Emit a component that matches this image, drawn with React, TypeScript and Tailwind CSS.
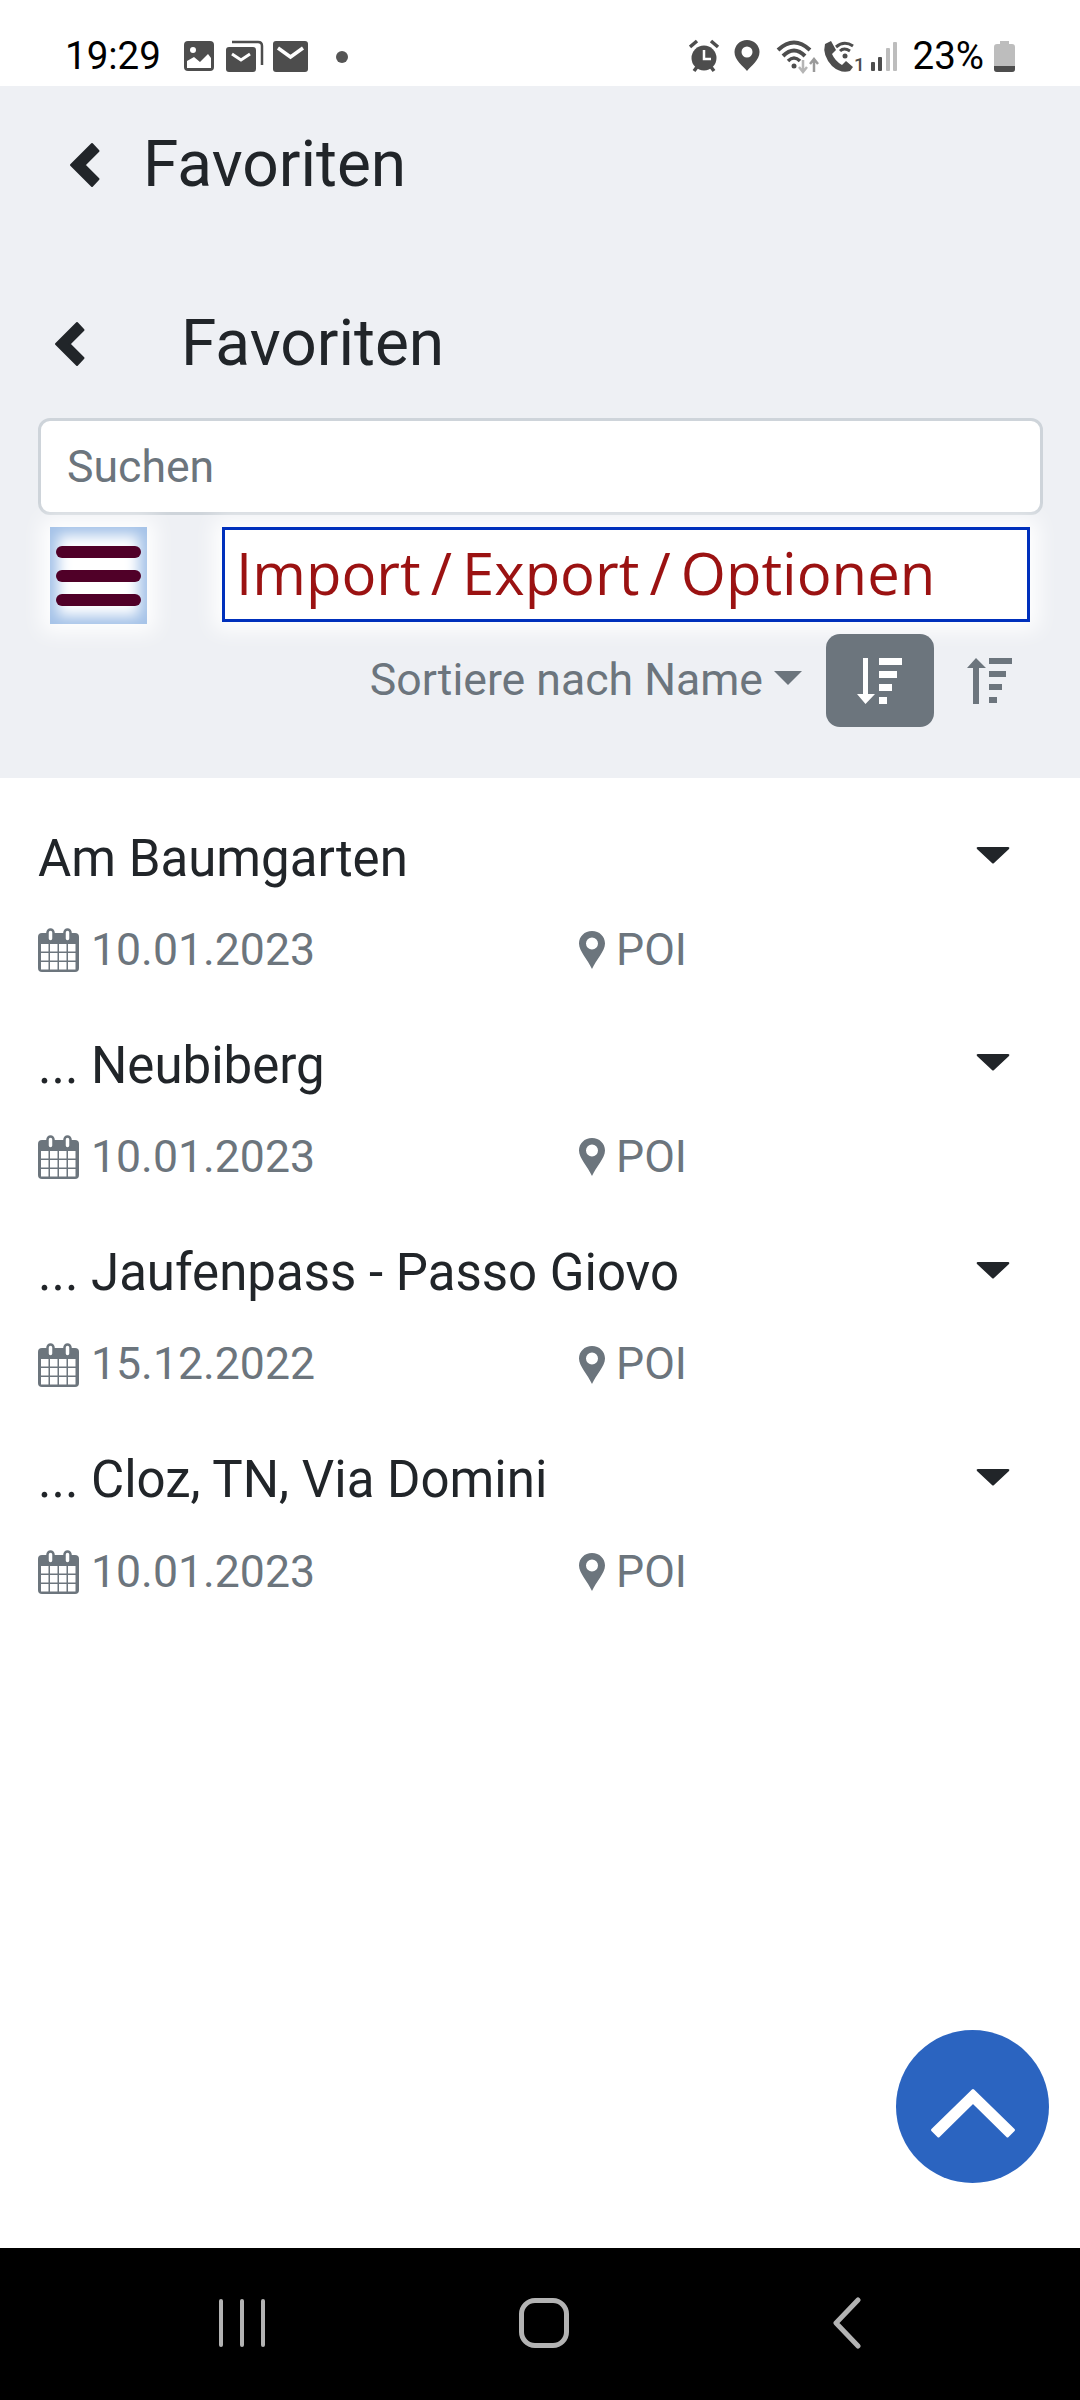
const rows = [
  { title: 'Am Baumgarten', date: '10.01.2023' },
  { title: '... Neubiberg', date: '10.01.2023' },
  { title: '... Jaufenpass - Passo Giovo', date: '15.12.2022' },
  { title: '... Cloz, TN, Via Domini', date: '10.01.2023' },
];

function Chevron() {
  return (
    <svg width="32" height="46" viewBox="0 0 32 46" className="shrink-0">
      <path d="M2 23 L23 2 L29.500 9 L15.500 23 L29.500 37 L23 44 Z" fill="#212529" stroke="#212529" strokeWidth="2" strokeLinejoin="round" />
    </svg>
  );
}

function StatusLeftIcons() {
  return (
    <svg width="170" height="34" viewBox="0 0 170 34" className="ml-[21px] shrink-0">
      {/* picture */}
      <rect x="2" y="2" width="30" height="30" rx="4" fill="#4d4d4d" />
      <circle cx="11" cy="11" r="3" fill="#fff" />
      <path d="M5 29 V22 L12 18 L18 23 L26 15 L29 19 V29 Z" fill="#fff" />
      {/* stacked mail */}
      <path d="M50 3 H76 Q80 3 80 7 V26" fill="none" stroke="#4d4d4d" strokeWidth="2.500" />
      <rect x="44" y="8" width="30" height="25" rx="3" fill="#4d4d4d" />
      <path d="M50 15 L59 21 L68 15" fill="none" stroke="#fff" strokeWidth="3" />
      {/* mail */}
      <rect x="91" y="2" width="35" height="31" rx="3" fill="#4d4d4d" />
      <path d="M96 9 L108.500 18 L121 9" fill="none" stroke="#fff" strokeWidth="3.500" />
      {/* dot */}
      <circle cx="160" cy="18" r="6" fill="#555" />
    </svg>
  );
}

function StatusRightIcons() {
  return (
    <svg width="210" height="38" viewBox="0 0 210 38" className="-mb-[4px] shrink-0">
      {/* alarm */}
      <circle cx="15" cy="19" r="12.500" fill="#4d4d4d" />
      <path d="M15 11 V20 H22" fill="none" stroke="#fff" strokeWidth="2.500" />
      <path d="M1 8 L8 2 M29 8 L22 2" stroke="#4d4d4d" strokeWidth="3.500" />
      <path d="M5 32 L8 28 M25 32 L22 28" stroke="#4d4d4d" strokeWidth="3.500" />
      {/* pin */}
      <path fillRule="evenodd" d="M58 1 C65 1 70.500 6.500 70.500 13 C70.500 21 62 27 58 32 C54 27 45.500 21 45.500 13 C45.500 6.500 51 1 58 1 Z M58 7.500 A5.500 5.500 0 1 0 58 18.500 A5.500 5.500 0 1 0 58 7.500 Z" fill="#4d4d4d" />
      {/* wifi */}
      <path d="M89 11 Q105 -4 121 11" fill="none" stroke="#4d4d4d" strokeWidth="4" />
      <path d="M94 17 Q105 6 116 17" fill="none" stroke="#4d4d4d" strokeWidth="4" />
      <path d="M99 22 Q105 16 111 22" fill="none" stroke="#4d4d4d" strokeWidth="3.500" />
      <circle cx="105" cy="27" r="2.500" fill="#4d4d4d" />
      <path d="M114 21 V32 M110 28 L114 33 L118 28" fill="none" stroke="#b5b5b5" strokeWidth="2.500" />
      <path d="M125 33 V21 M121 25 L125 20 L129 25" fill="none" stroke="#9a9a9a" strokeWidth="2.500" />
      {/* wifi call */}
      <path d="M136 5 L142 2 L147 11 L143 15 Q146 22 153 26 L157 22 L164 28 L161 32 Q152 35 143 27 Q133 16 136 5 Z" fill="#4d4d4d" />
      <path d="M147 8 Q155 1 164 7 M151 12 Q155 8 161 12" fill="none" stroke="#4d4d4d" strokeWidth="3" />
      <circle cx="156" cy="17" r="2.500" fill="#4d4d4d" />
      <text x="165" y="32" fontSize="19" fontWeight="500" fill="#4d4d4d" fontFamily="Roboto, sans-serif">1</text>
      {/* signal */}
      <rect x="182" y="23" width="4" height="9" rx="1" fill="#4d4d4d" />
      <rect x="189" y="18" width="4" height="14" rx="1" fill="#4d4d4d" />
      <rect x="197" y="9" width="4" height="23" rx="1" fill="#bdbdbd" />
      <rect x="204" y="3" width="4" height="29" rx="1" fill="#bdbdbd" />
    </svg>
  );
}

function Battery() {
  return (
    <svg width="22" height="33" viewBox="0 0 22 33" className="ml-[10px] shrink-0">
      <path d="M6 1 H15 V4 H18 Q21 4 21 7 V29 Q21 32 18 32 H3 Q0 32 0 29 V7 Q0 4 3 4 H6 Z" fill="#bdbdbd" />
      <path d="M0 26 H21 V29 Q21 32 18 32 H3 Q0 32 0 29 Z" fill="#4d4d4d" />
    </svg>
  );
}

function SortDownIcon() {
  return (
    <svg width="46" height="48" viewBox="0 0 46 48" fill="#fff">
      <path d="M6 1 H11 V37 H18 L8.500 47 L0 37 H6 Z" />
      <rect x="22" y="1" width="23" height="7" />
      <rect x="22" y="14" width="18" height="7" />
      <rect x="22" y="27" width="13" height="7" />
      <rect x="22" y="40" width="8" height="7" />
    </svg>
  );
}

function SortUpIcon() {
  return (
    <svg width="45" height="46" viewBox="0 0 45 46" fill="#6c757d">
      <path d="M6 46 H12 V10 H19 L9 0 L0 10 H6 Z" />
      <rect x="22" y="0" width="23" height="6" />
      <rect x="22" y="13" width="17" height="6" />
      <rect x="22" y="26" width="13" height="6" />
      <rect x="22" y="39" width="8" height="6" />
    </svg>
  );
}

function CalendarIcon() {
  return (
    <svg width="41" height="44" viewBox="0 0 41 44" className="shrink-0">
      <rect x="0" y="5" width="41" height="39" rx="4" fill="#6c757d" />
      <rect x="9.500" y="1.500" width="6" height="12" rx="3" fill="#fff" stroke="#6c757d" strokeWidth="2.500" />
      <rect x="26.500" y="1.500" width="6" height="12" rx="3" fill="#fff" stroke="#6c757d" strokeWidth="2.500" />
      <g fill="#fff">
        {[16, 25, 34].map((y) =>
          [3, 12, 21, 30].map((x) => <rect key={`${x}-${y}`} x={x} y={y} width="7.500" height="7.500" />),
        )}
      </g>
    </svg>
  );
}

function PinIcon() {
  return (
    <svg width="26" height="38" viewBox="0 0 26 38" className="shrink-0">
      <path fillRule="evenodd" d="M13 0 C20.500 0 26 5.500 26 12.500 C26 20 17 29 13 38 C9 29 0 20 0 12.500 C0 5.500 5.500 0 13 0 Z M13 6.500 A6 6 0 1 0 13 18.500 A6 6 0 1 0 13 6.500 Z" fill="#6c757d" />
    </svg>
  );
}

function ListRow({ title, date }: { title: string; date: string }) {
  return (
    <div className="h-[207.3px] pl-[38px] pr-[70px]">
      <div className="flex h-[60px] items-center justify-between">
        <span className="text-[51px] leading-none text-[#212529]">{title}</span>
        <svg width="34" height="18" viewBox="0 0 34 18" className="-mt-[6px]">
          <path d="M2 1 H32 Q34 1 33 3 L18 17 Q17 18 16 17 L1 3 Q0 1 2 1 Z" fill="#212529" />
        </svg>
      </div>
      <div className="mt-[32px] flex h-[60px] items-center text-[44.6px] leading-none text-[#6c757d]">
        <div className="flex w-[541px] items-center gap-[12px]">
          <CalendarIcon />
          <span>{date}</span>
        </div>
        <div className="flex items-center gap-[11px]">
          <PinIcon />
          <span>POI</span>
        </div>
      </div>
    </div>
  );
}

export default function App() {
  return (
    <div className="relative flex h-[2400px] w-[1080px] flex-col overflow-hidden bg-white font-['Roboto',sans-serif]">
      <div className="flex h-[86px] items-end justify-between pb-[11px] pl-[65px] pr-[64px] text-[38.5px] leading-[38px] text-black">
        <div className="flex items-center">
          <span>19:29</span>
          <StatusLeftIcons />
        </div>
        <div className="flex items-center">
          <StatusRightIcons />
          <span className="ml-[14px]">23%</span>
          <Battery />
        </div>
      </div>

      <div className="h-[692px] bg-[#eef0f4]">
        <div className="flex h-[158px] items-center pl-[69px]">
          <Chevron />
          <span className="ml-[42px] text-[64px] leading-none text-[#212529]">Favoriten</span>
        </div>
        <div className="mt-[26px] flex h-[148px] items-center pl-[54px]">
          <Chevron />
          <span className="ml-[95px] text-[64px] leading-none text-[#212529]">Favoriten</span>
        </div>
        <input
          placeholder="Suchen"
          className="ml-[38px] block h-[97px] w-[1005px] rounded-[12px] border-[3px] border-[#ced4da] bg-white px-[26px] text-[44.6px] outline-none placeholder:text-[#6c757d]"
        />
        <div className="mt-[12px] flex">
          <div className="ml-[50px] flex h-[97px] w-[97px] flex-col justify-center gap-[12px] bg-white px-[6px] shadow-[inset_0_0_14px_8px_#a4c2e8,0_0_20px_8px_#ffffff]">
            <div className="h-[12px] rounded-full bg-[#500028]" />
            <div className="h-[12px] rounded-full bg-[#500028]" />
            <div className="h-[12px] rounded-full bg-[#500028]" />
          </div>
          <div className="ml-[75px] flex h-[95px] w-[808px] items-center border-[3px] border-[#0030bc] bg-white pb-[3px] pl-[11px] font-['Open_Sans',sans-serif] text-[58px] leading-none text-[#9b1212] [word-spacing:-5px] shadow-[0_0_20px_8px_#ffffff]">
            Import / Export / Optionen
          </div>
        </div>
        <div className="relative mt-[10px] flex h-[93px] items-center justify-end pr-[68px]">
          <span className="text-[44.6px] leading-none text-[#6c757d]">Sortiere nach Name</span>
          <svg width="28" height="14" viewBox="0 0 28 14" className="ml-[11px] -mt-[6px]">
            <path d="M0 0 H28 L14 14 Z" fill="#6c757d" />
          </svg>
          <div className="ml-[24px] flex h-[93px] w-[108px] items-center justify-center rounded-[14px] bg-[#6c757d]">
            <SortDownIcon />
          </div>
          <div className="ml-[33px]">
            <SortUpIcon />
          </div>
        </div>
      </div>

      <div className="relative flex-1 pt-[50px]">
        {rows.map((r) => (
          <ListRow key={r.title} title={r.title} date={r.date} />
        ))}
        <button className="absolute bottom-[65px] left-[896px] flex h-[153px] w-[153px] items-center justify-center rounded-full bg-[#2b64c0]">
          <svg width="90" height="60" viewBox="0 0 90 60" className="overflow-visible">
            <path d="M45 13.500 L85.500 53 L79.500 59 L45 25 L10.500 59 L4.500 53 Z" fill="#fff" stroke="#fff" strokeWidth="3" strokeLinejoin="round" />
          </svg>
        </button>
      </div>

      <div className="flex h-[152px] items-center bg-black pb-[2px]">
        <div className="ml-[219px] flex h-[48px] gap-[17px]">
          <div className="w-[4px] rounded-full bg-[#b3b3b3]" />
          <div className="w-[4px] rounded-full bg-[#b3b3b3]" />
          <div className="w-[4px] rounded-full bg-[#b3b3b3]" />
        </div>
        <div className="ml-[254px] h-[50px] w-[50px] rounded-[16px] border-[5px] border-[#b3b3b3]" />
        <svg width="30" height="52" viewBox="0 0 30 52" className="ml-[263px]">
          <path d="M26 3 L4 26 L26 49" fill="none" stroke="#b3b3b3" strokeWidth="5" strokeLinecap="round" strokeLinejoin="round" />
        </svg>
      </div>
    </div>
  );
}
